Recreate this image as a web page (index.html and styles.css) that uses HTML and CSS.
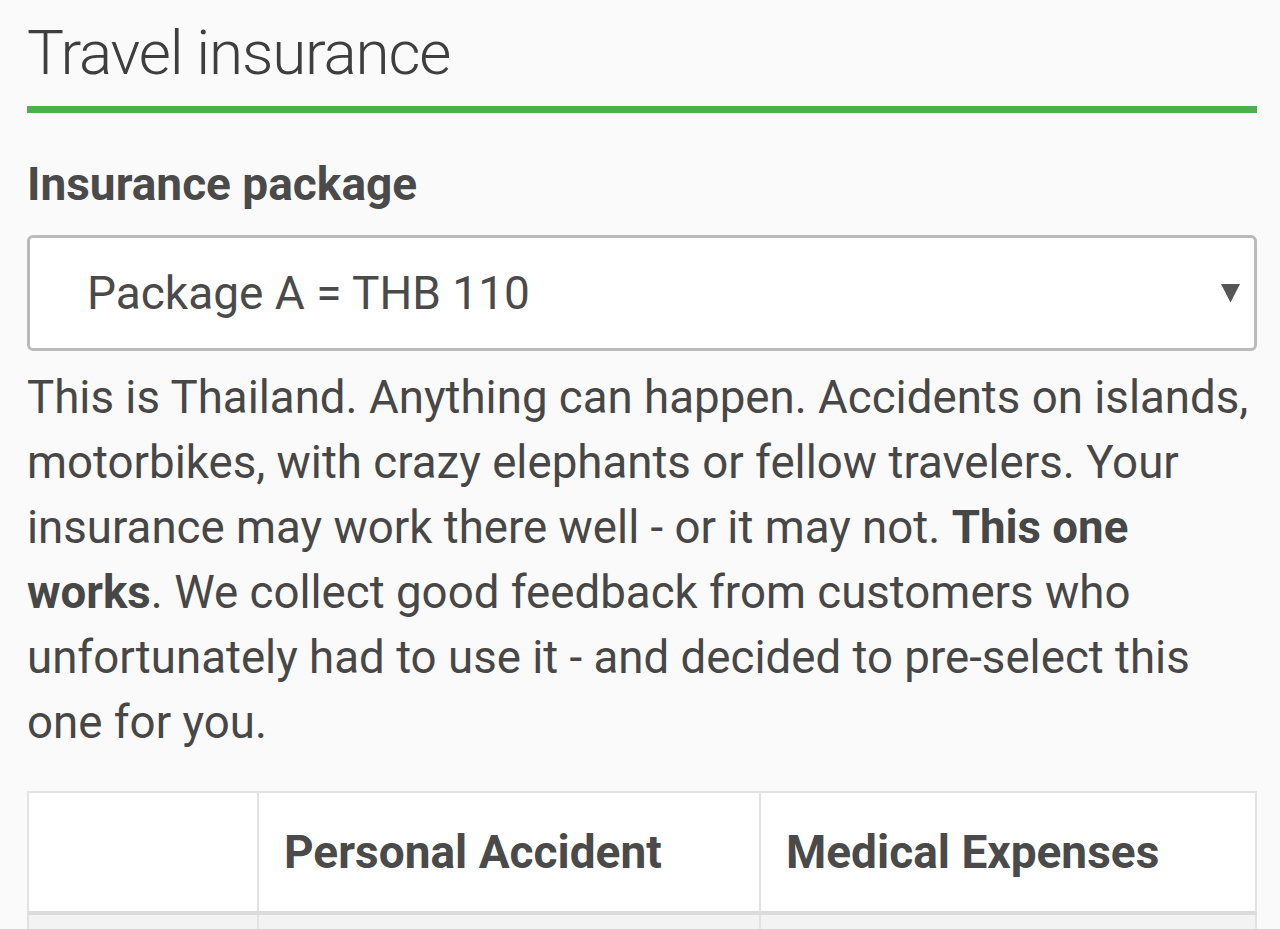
FILE: index.html
```html
<!DOCTYPE html>
<html lang="en">
<head>
<meta charset="utf-8">
<title>Travel insurance</title>
<link rel="stylesheet" href="styles.css">
</head>
<body>
  <section class="insurance">
    <h1 class="section-title">Travel insurance</h1>
    <label class="field-label">Insurance package</label>
    <div class="select-box">
      <span class="select-value">Package A = THB 110</span>
      <svg class="select-arrow" width="19" height="19" viewBox="0 0 19 19" aria-hidden="true"><polygon points="0,0 19,0 9.5,18.5" fill="#555"/></svg>
    </div>
    <p class="description">This is Thailand. Anything can happen. Accidents on islands, motorbikes, with crazy elephants or fellow travelers. Your insurance may work there well - or it may not. <strong>This one works</strong>. We collect good feedback from customers who unfortunately had to use it - and decided to pre-select this one for you.</p>
    <table class="coverage">
      <colgroup>
        <col class="col-label">
        <col class="col-accident">
        <col class="col-medical">
      </colgroup>
      <thead>
        <tr>
          <th></th>
          <th>Personal Accident</th>
          <th>Medical Expenses</th>
        </tr>
      </thead>
      <tbody>
        <tr>
          <td>&nbsp;</td>
          <td>&nbsp;</td>
          <td>&nbsp;</td>
        </tr>
      </tbody>
    </table>
  </section>
</body>
</html>
```
FILE: styles.css
```css
html, body {
  margin: 0;
  padding: 0;
}

body {
  background: #fafafa;
  font-family: Roboto, "Liberation Sans", sans-serif;
  color: #474747;
}

.insurance {
  padding: 0 23px 0 27px;
}

.section-title {
  margin: 0;
  padding: 15px 0 15px;
  font-size: 62px;
  line-height: 76px;
  font-weight: 300;
  letter-spacing: -1.2px;
  color: #3e3e3e;
  border-bottom: 7px solid #4caf50;
}

.field-label {
  display: block;
  margin-top: 41px;
  font-size: 46px;
  line-height: 60px;
  font-weight: 700;
  color: #4a4a4a;
}

.select-box {
  margin-top: 21px;
  box-sizing: border-box;
  height: 116px;
  border: 3px solid #bababa;
  border-radius: 6px;
  background: #fff;
  display: flex;
  align-items: center;
  justify-content: space-between;
  padding: 0 14px 0 57px;
}

.select-value {
  font-size: 46px;
  line-height: 54px;
  color: #4a4a4a;
}

.select-arrow {
  display: block;
}

.description {
  margin: 14px 0 0;
  font-size: 45.65px;
  line-height: 65px;
  color: #474747;
}

.description strong {
  font-weight: 700;
}

.coverage {
  margin-top: 36px;
  width: 100%;
  border-collapse: collapse;
  table-layout: fixed;
  background: #fff;
  border: 2px solid #e2e2e2;
}

.col-label { width: 230px; }
.col-accident { width: 502px; }

.coverage th,
.coverage td {
  border: 2px solid #e2e2e2;
  padding: 29px 25px;
  text-align: left;
  font-size: 46px;
  line-height: 60px;
}

.coverage th {
  font-weight: 700;
  color: #4a4a4a;
  border-bottom: 4px solid #dcdcdc;
}

.coverage tbody tr {
  background: #f3f3f3;
}
```
